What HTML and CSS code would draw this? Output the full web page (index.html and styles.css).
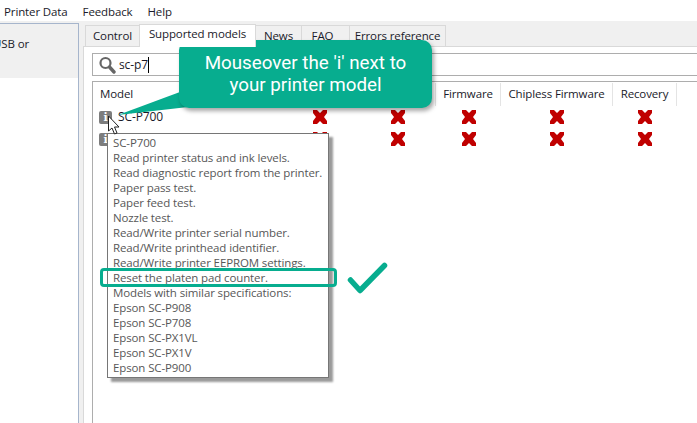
FILE: index.html
```html
<!DOCTYPE html>
<html lang="en">
<head>
<meta charset="utf-8">
<title>Supported models</title>
<link rel="stylesheet" href="styles.css">
</head>
<body>
<nav class="menubar">
  <span>Printer Data</span><span>Feedback</span><span>Help</span>
</nav>
<div class="main">
  <aside class="sidebar">
    <div class="side-selected">USB or</div>
  </aside>
  <section class="content">
    <div class="tabs">
      <span class="tab tab-first">Control</span>
      <span class="tab tab-active">Supported models</span>
      <span class="tab tab-news">News</span>
      <span class="tab tab-faq">FAQ</span>
      <span class="tab tab-errors">Errors reference</span>
    </div>
    <div class="page">
      <div class="search">
        <svg class="search-icon" width="18" height="18" viewBox="0 0 18 18"><circle cx="7.500" cy="7" r="5" fill="none" stroke="#666" stroke-width="2.200"/><path d="M11.500 11l4.500 5" stroke="#666" stroke-width="3.400" stroke-linecap="round"/></svg>
        <span class="query">sc-p7</span><span class="caret"></span>
      </div>
      <div class="table">
        <div class="thead">
          <div class="th th-model">Model</div>
          <div class="th"></div>
          <div class="th"></div>
          <div class="th">Firmware</div>
          <div class="th">Chipless Firmware</div>
          <div class="th">Recovery</div>
        </div>
        <div class="row">
          <div class="cell-model"><span class="info">i</span><span class="model-name">SC-P700</span></div>
          <div class="cell"><svg class="x" viewBox="0 0 14 14"><path d="M0 0h4l3 3 3-3h4v3l-3 4 3 4v3h-4l-3-3-3 3H0v-3l3-4-3-4z"/></svg></div>
          <div class="cell"><svg class="x" viewBox="0 0 14 14"><path d="M0 0h4l3 3 3-3h4v3l-3 4 3 4v3h-4l-3-3-3 3H0v-3l3-4-3-4z"/></svg></div>
          <div class="cell"><svg class="x" viewBox="0 0 14 14"><path d="M0 0h4l3 3 3-3h4v3l-3 4 3 4v3h-4l-3-3-3 3H0v-3l3-4-3-4z"/></svg></div>
          <div class="cell"><svg class="x" viewBox="0 0 14 14"><path d="M0 0h4l3 3 3-3h4v3l-3 4 3 4v3h-4l-3-3-3 3H0v-3l3-4-3-4z"/></svg></div>
          <div class="cell"><svg class="x" viewBox="0 0 14 14"><path d="M0 0h4l3 3 3-3h4v3l-3 4 3 4v3h-4l-3-3-3 3H0v-3l3-4-3-4z"/></svg></div>
        </div>
        <div class="row">
          <div class="cell-model"><span class="info">i</span></div>
          <div class="cell"><svg class="x" viewBox="0 0 14 14"><path d="M0 0h4l3 3 3-3h4v3l-3 4 3 4v3h-4l-3-3-3 3H0v-3l3-4-3-4z"/></svg></div>
          <div class="cell"><svg class="x" viewBox="0 0 14 14"><path d="M0 0h4l3 3 3-3h4v3l-3 4 3 4v3h-4l-3-3-3 3H0v-3l3-4-3-4z"/></svg></div>
          <div class="cell"><svg class="x" viewBox="0 0 14 14"><path d="M0 0h4l3 3 3-3h4v3l-3 4 3 4v3h-4l-3-3-3 3H0v-3l3-4-3-4z"/></svg></div>
          <div class="cell"><svg class="x" viewBox="0 0 14 14"><path d="M0 0h4l3 3 3-3h4v3l-3 4 3 4v3h-4l-3-3-3 3H0v-3l3-4-3-4z"/></svg></div>
          <div class="cell"><svg class="x" viewBox="0 0 14 14"><path d="M0 0h4l3 3 3-3h4v3l-3 4 3 4v3h-4l-3-3-3 3H0v-3l3-4-3-4z"/></svg></div>
        </div>
      </div>
    </div>
  </section>
</div>

<div class="tooltip">
  <div>SC-P700</div>
  <div>Read printer status and ink levels.</div>
  <div>Read diagnostic report from the printer.</div>
  <div>Paper pass test.</div>
  <div>Paper feed test.</div>
  <div>Nozzle test.</div>
  <div>Read/Write printer serial number.</div>
  <div>Read/Write printhead identifier.</div>
  <div>Read/Write printer EEPROM settings.</div>
  <div>Reset the platen pad counter.</div>
  <div>Models with similar specifications:</div>
  <div>Epson SC-P908</div>
  <div>Epson SC-P708</div>
  <div>Epson SC-PX1VL</div>
  <div>Epson SC-PX1V</div>
  <div>Epson SC-P900</div>
</div>
<svg class="cursor" width="14" height="22" viewBox="0 0 14 22"><path d="M1.500 1v15l3.500-3 2.500 6 2.500-1-2.500-6h4.500z" fill="#fff" stroke="#222" stroke-width="1"/></svg>
<svg class="tail" width="70" height="30" viewBox="0 0 70 30"><path d="M0 30L70 4v18z" fill="#07ad8f"/></svg>
<div class="callout">Mouseover the 'i' next to<br>your printer model</div>
<div class="highlight"></div>
<svg class="check" width="42" height="36" viewBox="0 0 42 36"><path d="M4.500 19l9.500 10.500L38.500 4.500" fill="none" stroke="#07ad8f" stroke-width="5.500" stroke-linecap="round" stroke-linejoin="round"/></svg>
</body>
</html>
```
FILE: styles.css
```css
* { box-sizing: border-box; }
html, body { margin: 0; height: 100%; overflow: hidden; }
body {
  width: 697px; height: 423px; position: relative;
  background: #f0f0f0; color: #1a1a2a;
  font: 11.500px/16px "Open Sans", "Noto Sans", sans-serif;
  letter-spacing: -.12px;
  display: flex; flex-direction: column;
}
.menubar { height: 21px; background: #fff; display: flex; gap: 15px; padding: 4px 0 0 4px; }
.main { flex: 1; display: flex; padding-top: 2px; min-height: 0; }
.sidebar {
  width: 79px; background: #fff; overflow: hidden;
  border: 1px solid #a6b5cc; border-left: 0; border-bottom: 0;
}
.side-selected { height: 54px; background: #f0f0f0; padding: 12px 0 0 0; white-space: nowrap; text-indent: -7px; }
.content { flex: 1; padding: 0 0 0 4px; display: flex; flex-direction: column; min-width: 0; }
.tabs { height: 23px; display: flex; align-items: flex-end; padding-left: 3px; position: relative; }
.tab { height: 21px; background: #f0f0f0; border: 1px solid #d9d9d9; border-bottom: 0; padding: 2px 0 0 0; text-align: center; margin-left: -1px; white-space: nowrap; }
.tab-first { width: 55px; }
.tab-active { width: 117px; height: 23px; background: #fff; position: relative; z-index: 1; padding-top: 1px; margin-bottom: -1px; }
.tab-news { width: 47px; }
.tab-faq { width: 49px; padding-right: 6px; }
.tab-errors { width: 97px; }
.page { flex: 1; background: #fff; border-top: 1px solid #d9d9d9; border-left: 1px solid #d9d9d9; padding: 6px 0 0 8px; display: flex; flex-direction: column; gap: 5px; }
.search { height: 23px; border: 1px solid #adadad; border-right: 0; display: flex; align-items: center; padding-left: 5px; font-size: 12px; }
.search-icon { margin-right: 3px; flex: none; }
.caret { width: 1px; height: 16px; background: #000; }
.table { flex: 1; border: 1px solid #adadad; border-right: 0; border-bottom: 0; padding-top: 1px; }
.thead, .row { display: grid; grid-template-columns: 188px 78px 77px 65px 112px 64px; }
.thead { height: 23px; }
.row { height: 22px; align-items: center; }
.th { border-right: 1px solid #e4e4e4; padding-top: 3px; text-align: center; white-space: nowrap; }
.th-model { text-align: left; padding-left: 7px; }
.cell-model { display: flex; gap: 6px; align-items: center; padding-left: 6px; }
.model-name { font-size: 12px; }
.info { width: 13px; height: 13px; background: #7d7d7d; color: #fff; border-radius: 2px; font: bold 11px/13px "DejaVu Serif", serif; letter-spacing: 0; text-align: center; }
.cell { display: flex; justify-content: center; }
.x { width: 14px; height: 14px; fill: #c00000; }
.tooltip {
  position: absolute; left: 107px; top: 133px; width: 222px; height: 245px;
  background: #fff; border: 1px solid #767676; box-shadow: 4px 4px 2px #9a9a9a;
  padding: 1px 0 0 5px; color: #575757; line-height: 15px; white-space: nowrap;
}
.cursor { position: absolute; left: 107px; top: 115px; }
.tail { position: absolute; left: 118px; top: 85px; }
.callout {
  position: absolute; left: 179px; top: 40px; width: 253px; height: 68px;
  background: #07ad8f; color: #fff; border-radius: 10px; box-shadow: 2px 3px 4px rgba(0,0,0,.35);
  font: 18.800px/22px Roboto, "Liberation Sans", sans-serif; letter-spacing: 0; text-align: center; padding-top: 12px;
}
.highlight { position: absolute; left: 100px; top: 268px; width: 237px; height: 19px; border: 3px solid #07ad8f; border-radius: 4px; }
.check { position: absolute; left: 346px; top: 261px; }
```
